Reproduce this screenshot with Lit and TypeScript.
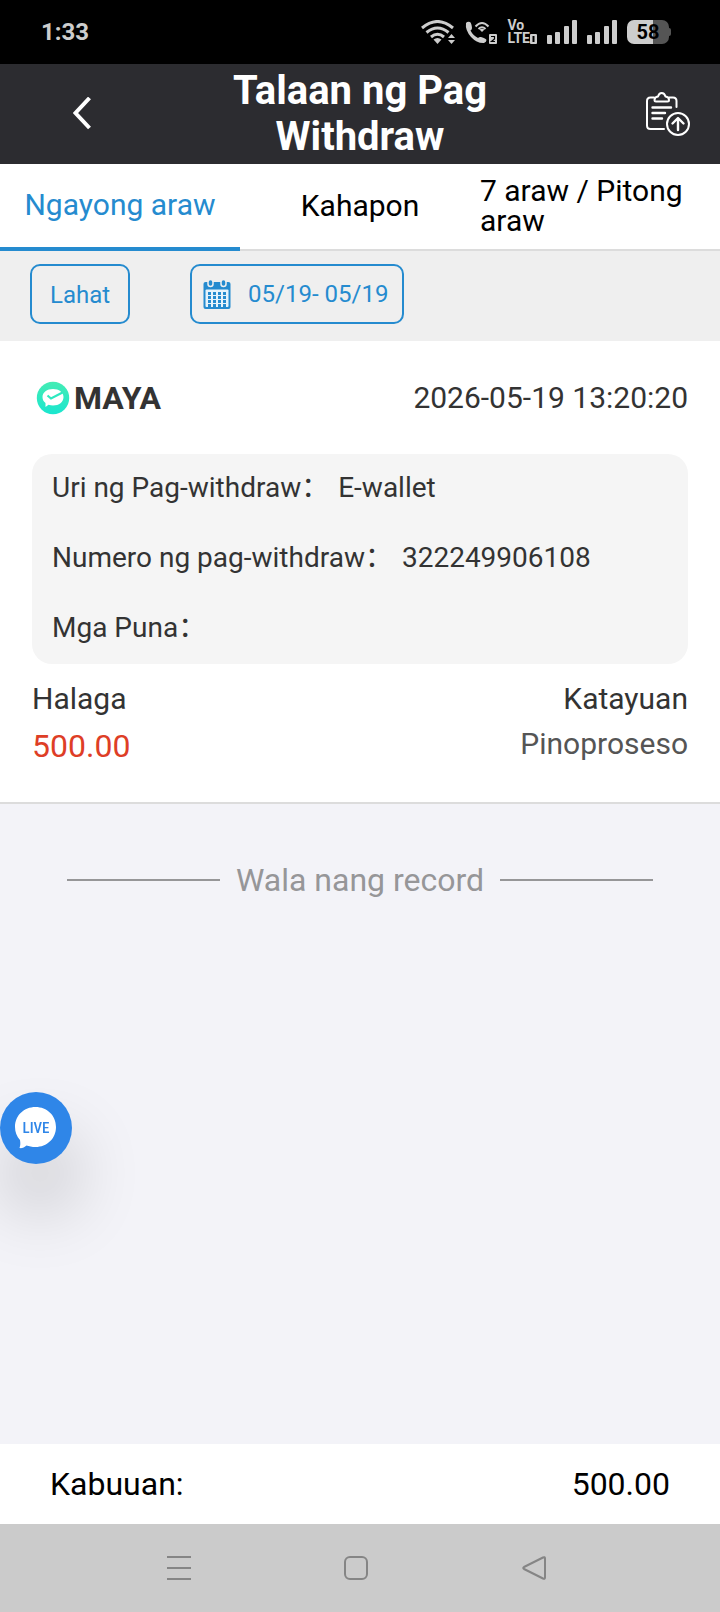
import { LitElement, html, css, svg } from "lit";
import { customElement, property, state } from "lit/decorators.js";

interface Detail {
  label: string;
  value: string;
}

interface WithdrawRecord {
  wallet: string;
  time: string;
  details: Detail[];
  amount: string;
  status: string;
}

const TABS = ["Ngayong araw", "Kahapon", "7 araw / Pitong araw"];

const RECORDS: WithdrawRecord[] = [
  {
    wallet: "MAYA",
    time: "2026-05-19 13:20:20",
    details: [
      { label: "Uri ng Pag-withdraw", value: "E-wallet" },
      { label: "Numero ng pag-withdraw", value: "322249906108" },
      { label: "Mga Puna", value: "" },
    ],
    amount: "500.00",
    status: "Pinoproseso",
  },
];

@customElement("status-bar")
class StatusBar extends LitElement {
  static styles = css`
    :host {
      display: flex;
      align-items: center;
      justify-content: space-between;
      height: 64px;
      padding: 0 49px 0 41px;
      background: #000;
      color: #cdcdcd;
    }
    .time {
      font-size: 24px;
      font-weight: 700;
      line-height: 28px;
    }
    .icons {
      display: flex;
      align-items: center;
      gap: 10px;
    }
    .volte {
      display: grid;
      font-size: 14px;
      font-weight: 700;
      line-height: 13px;
    }
    .lte {
      display: flex;
      align-items: center;
    }
    .battery {
      display: flex;
      align-items: center;
    }
    .level {
      width: 42px;
      border-radius: 7px;
      background: linear-gradient(90deg, #cdcdcd 62%, #555 62%);
      color: #000;
      font-size: 20px;
      font-weight: 700;
      line-height: 24px;
      text-align: center;
    }
    .cap {
      width: 2px;
      height: 8px;
      border-radius: 0 2px 2px 0;
      background: #555;
    }
    svg {
      display: block;
    }
  `;

  private signal() {
    return html`<svg width="30" height="24" viewBox="0 0 30 24" fill="currentColor" aria-hidden="true">
      <rect x="0" y="15" width="5" height="9" rx="1" />
      <rect x="8" y="12" width="5" height="12" rx="1" />
      <rect x="17" y="6" width="5" height="18" rx="1" />
      <rect x="25" y="0" width="5" height="24" rx="1" />
    </svg>`;
  }

  render() {
    return html`
      <span class="time">1:33</span>
      <div class="icons">
        <svg width="34" height="24" viewBox="0 0 34 24" fill="none" stroke="currentColor" stroke-width="3" aria-hidden="true">
          <path d="M1 8 Q16.500 -5 32 8" />
          <path d="M5.500 12.500 Q16.500 3.500 27.500 12.500" />
          <path d="M10 17 Q16.500 11.500 23 17" />
          <path d="M16.500 24 l-4 -4.500 q4 -3 8 0z" fill="currentColor" stroke="none" />
          <path d="M27 18 l3.500 -4 3.500 4z M27 20 h7 l-3.500 4z" fill="currentColor" stroke="none" />
        </svg>
        <svg width="32" height="23" viewBox="0 0 32 23" fill="currentColor" aria-hidden="true">
          <path d="M1 2 Q2.500 0 5 1 Q6.500 2 7 7 Q7 8.500 5.500 9.500 Q8 14.500 13 17 Q14.500 15.500 16 16 Q21 17.500 21.500 19 Q21.500 21 19 22 Q12 22.500 6 16 Q0 9 1 2z" />
          <g fill="none" stroke="currentColor" stroke-width="2">
            <path d="M10.500 5.500 Q17 -1.500 23.500 5.500" />
            <path d="M13.500 8 Q17 4.500 20.500 8" />
          </g>
          <path d="M17 11 l-2.500 -2.500 q2.500 -1.500 5 0z" />
          <rect x="24" y="13" width="8" height="10" rx="1" />
          <path d="M26 15.500 h3.500 v2.500 l-3 2.500 h3.500" fill="none" stroke="#000" stroke-width="1.200" />
        </svg>
        <div class="volte">
          <span>Vo</span>
          <span class="lte">LTE<svg width="7" height="10" viewBox="0 0 7 10" aria-hidden="true">
            <rect width="7" height="10" rx="1" fill="currentColor" />
            <rect x="2.500" y="2" width="2" height="6" fill="#000" />
          </svg></span>
        </div>
        ${this.signal()} ${this.signal()}
        <div class="battery"><span class="level">58</span><span class="cap"></span></div>
      </div>
    `;
  }
}

@customElement("record-card")
class RecordCard extends LitElement {
  @property({ attribute: false }) record!: WithdrawRecord;

  static styles = css`
    :host {
      display: block;
      padding: 32px;
      border-bottom: 2px solid #dcdcdc;
      background: #fff;
      color: #333;
    }
    .head {
      display: flex;
      align-items: center;
      justify-content: space-between;
      height: 50px;
      margin-bottom: 31px;
      font-size: 30px;
      line-height: 36px;
    }
    .wallet {
      display: flex;
      align-items: center;
      gap: 4px;
      padding-left: 4px;
      font-size: 32px;
      font-weight: 700;
      margin: 0;
    }
    .details {
      margin: 0;
      padding: 0 20px 2px;
      border-radius: 20px;
      background: #f5f5f5;
      font-size: 28px;
    }
    .row {
      display: flex;
      align-items: center;
      gap: 9px;
      height: 68px;
      line-height: 36px;
    }
    .row + .row {
      margin-top: 2px;
    }
    dt,
    dd {
      margin: 0;
    }
    .foot {
      display: flex;
      justify-content: space-between;
      padding-top: 12px;
      font-size: 30px;
      line-height: 46px;
    }
    .end {
      text-align: right;
    }
    .label,
    .amount,
    .status {
      margin: 0;
    }
    .amount {
      color: #de3e26;
      font-size: 32px;
      line-height: 48px;
    }
    .status {
      color: #555;
      line-height: 44px;
    }
    svg {
      display: block;
    }
  `;

  render() {
    const r = this.record;
    return html`
      <div class="head">
        <h2 class="wallet">
          <svg width="34" height="34" viewBox="0 0 34 34" aria-hidden="true">
            <defs>
              <linearGradient id="mint" x1="0" y1="0" x2="0" y2="1">
                <stop offset="0" stop-color="#44ecb4" />
                <stop offset="1" stop-color="#1ae6cf" />
              </linearGradient>
            </defs>
            <circle cx="17" cy="17" r="16.200" fill="url(#mint)" />
            <path d="M17 8 C23 8 27.500 11.500 27.500 16 C27.500 21 23 24.500 17 24.500 C15.500 24.500 14 24.300 12.500 23.800 L9.500 26 L9.500 22 C7.500 20.500 6.500 18.500 6.500 16 C6.500 11.500 11 8 17 8z" fill="#fff" />
            <path d="M11.500 14.500 L15 17.500 L26.500 11.500" fill="none" stroke="#2ee9c0" stroke-width="2.200" />
          </svg>
          <span>${r.wallet}</span>
        </h2>
        <time>${r.time}</time>
      </div>
      <dl class="details">
        ${r.details.map(
          (d) => html`<div class="row"><dt>${d.label}：</dt><dd>${d.value}</dd></div>`
        )}
      </dl>
      <div class="foot">
        <div>
          <p class="label">Halaga</p>
          <p class="amount">${r.amount}</p>
        </div>
        <div class="end">
          <p class="label">Katayuan</p>
          <p class="status">${r.status}</p>
        </div>
      </div>
    `;
  }
}

@customElement("app-root")
class AppRoot extends LitElement {
  @state() private active = 0;

  static styles = css`
    :host {
      display: flex;
      flex-direction: column;
      min-height: 100vh;
      background: #f3f3f8;
      color: #000;
      font-family: Roboto, "Noto Sans CJK SC", sans-serif;
    }
    button {
      margin: 0;
      padding: 0;
      border: 0;
      background: none;
      color: inherit;
      font: inherit;
      cursor: pointer;
    }
    svg {
      display: block;
    }
    .header {
      display: grid;
      grid-template-columns: 1fr 320px 1fr;
      align-items: center;
      height: 100px;
      background: #2c2c30;
      color: #fff;
    }
    .title {
      margin: 0;
      font-size: 40px;
      font-weight: 700;
      line-height: 46px;
      text-align: center;
    }
    .back {
      justify-self: start;
      padding: 8px 20px 8px 73px;
    }
    .export {
      justify-self: end;
      padding-right: 30px;
    }
    .tabs {
      display: grid;
      grid-template-columns: repeat(3, 1fr);
      height: 87px;
      background: #fff;
      font-size: 30px;
      line-height: 30px;
    }
    .tabs button {
      display: flex;
      align-items: center;
      justify-content: center;
      padding-bottom: 2px;
      border-bottom: 2px solid #dcdcdc;
      text-align: left;
    }
    .tabs .active {
      border-bottom: 4px solid #258bcf;
      color: #258bcf;
    }
    .filters {
      display: flex;
      gap: 60px;
      padding: 13px 30px 17px;
      background: #efefef;
    }
    .filters button {
      display: flex;
      align-items: center;
      gap: 17px;
      height: 60px;
      border: 2px solid #258bcf;
      border-radius: 10px;
      color: #258bcf;
      font-size: 24px;
      line-height: 28px;
    }
    .filters .all {
      padding: 2px 18px 0;
    }
    .filters .date {
      padding: 0 14px 0 11px;
    }
    .list {
      flex: 1;
    }
    .end {
      display: flex;
      align-items: center;
      gap: 16px;
      margin: 0;
      padding: 56px 67px;
      color: #969698;
      font-size: 32px;
      line-height: 40px;
    }
    .end::before,
    .end::after {
      content: "";
      flex: 1;
      height: 2px;
      background: #969698;
    }
    .total {
      display: flex;
      align-items: center;
      justify-content: space-between;
      height: 80px;
      padding: 0 50px;
      background: #fff;
      font-size: 32px;
    }
    .nav {
      display: grid;
      grid-template-columns: repeat(3, 1fr);
      height: 88px;
      padding: 0 97px 0 90px;
      background: #cbcbcb;
      color: #858585;
    }
    .nav button {
      display: grid;
      place-items: center;
    }
    .live {
      position: fixed;
      left: 0;
      top: 1092px;
      display: grid;
      place-items: center;
      width: 72px;
      height: 72px;
      border-radius: 50%;
      background: #2f86e8;
      box-shadow: 4px 45px 70px rgba(0, 0, 0, 0.2);
    }
    .word {
      fill: #2f86e8;
      font-family: "Roboto Condensed", "Liberation Sans Narrow", Roboto, sans-serif;
      font-size: 15px;
      font-weight: 500;
      text-anchor: middle;
    }
  `;

  private calendar() {
    const cells = [];
    for (let r = 0; r < 4; r++) {
      for (let c = 0; c < 4; c++) {
        cells.push(svg`<rect x=${5 + c * 5} y=${13 + r * 4} width="3" height="3" fill="#258bcf" />`);
      }
    }
    return html`<svg width="28" height="30" viewBox="0 0 28 30" aria-hidden="true">
      <rect x="0.500" y="3" width="27" height="27" rx="2" fill="#258bcf" />
      <rect x="2.500" y="10.500" width="23" height="17.500" rx="1" fill="#e6f3fb" />
      <rect x="5" y="0.500" width="5" height="7" rx="2.500" fill="#258bcf" stroke="#efefef" stroke-width="1.500" />
      <rect x="18" y="0.500" width="5" height="7" rx="2.500" fill="#258bcf" stroke="#efefef" stroke-width="1.500" />
      ${cells}
    </svg>`;
  }

  render() {
    return html`
      <status-bar></status-bar>
      <header class="header">
        <button class="back" aria-label="Bumalik">
          <svg width="18" height="34" viewBox="0 0 18 34" fill="none" stroke="currentColor" stroke-width="4" aria-hidden="true">
            <path d="M16.500 1 L2.500 16 L16.500 31" />
          </svg>
        </button>
        <h1 class="title">Talaan ng Pag Withdraw</h1>
        <button class="export" aria-label="Mag-withdraw">
          <svg width="44" height="44" viewBox="0 0 44 44" fill="none" stroke="currentColor" stroke-width="2" stroke-linecap="round" stroke-linejoin="round" aria-hidden="true">
            <path d="M8 5.500 H4.500 Q1 5.500 1 9 V33.500 Q1 37 4.500 37 H18" />
            <path d="M23 5.500 H27 Q30.500 5.500 30.500 9 V15" />
            <path d="M10 9.500 Q8.500 9.500 8.500 8 Q8.500 5 12 4.500 Q13 1 15.700 1 Q18.500 1 19.500 4.500 Q23 5 23 8 Q23 9.500 21.500 9.500z" />
            <path d="M6.500 15.500 H25 M6.500 21 H19 M6.500 26.500 H16" stroke-width="2.400" />
            <circle cx="32" cy="32" r="11" />
            <path d="M32 38 V26.500 M26.500 31.500 L32 26 L37.500 31.500" stroke-width="2.400" />
          </svg>
        </button>
      </header>
      <nav class="tabs">
        ${TABS.map(
          (t, i) => html`<button class=${i === this.active ? "active" : ""} @click=${() => (this.active = i)}>
            <span>${t}</span>
          </button>`
        )}
      </nav>
      <div class="filters">
        <button class="all">Lahat</button>
        <button class="date">${this.calendar()}<span>05/19- 05/19</span></button>
      </div>
      <main class="list">
        ${RECORDS.map((r) => html`<record-card .record=${r}></record-card>`)}
        <p class="end">Wala nang record</p>
      </main>
      <div class="total"><span>Kabuuan:</span><span>500.00</span></div>
      <nav class="nav">
        <button aria-label="Mga app">
          <svg width="24" height="24" viewBox="0 0 24 24" stroke="currentColor" stroke-width="2" aria-hidden="true">
            <path d="M0 1 H24 M0 12 H24 M0 23 H24" />
          </svg>
        </button>
        <button aria-label="Home">
          <svg width="24" height="24" viewBox="0 0 24 24" fill="none" stroke="currentColor" stroke-width="2" aria-hidden="true">
            <rect x="1" y="1" width="22" height="22" rx="5" />
          </svg>
        </button>
        <button aria-label="Balik">
          <svg width="24" height="24" viewBox="0 0 24 24" fill="none" stroke="currentColor" stroke-width="2" stroke-linejoin="round" aria-hidden="true">
            <path d="M21 1.500 Q23 0.500 23 2.500 V21.500 Q23 23.500 21 22.500 L2 13 Q0.500 12 2 11z" />
          </svg>
        </button>
      </nav>
      <button class="live">
        <svg width="72" height="72" viewBox="0 0 72 72" aria-hidden="true">
          <path d="M35.500 15 C47 15 56 23.500 56 35 C56 46.500 47 55 35.500 55 C32 55 29 54.300 26.500 53.500 C24.500 55.500 21.500 56.500 19.500 56 C20.500 53.500 20.500 51 20 48 C16.800 44.500 15 40 15 35 C15 23.500 24 15 35.500 15z" fill="#fff" />
          <text class="word" x="36" y="41">LIVE</text>
        </svg>
      </button>
    `;
  }
}
